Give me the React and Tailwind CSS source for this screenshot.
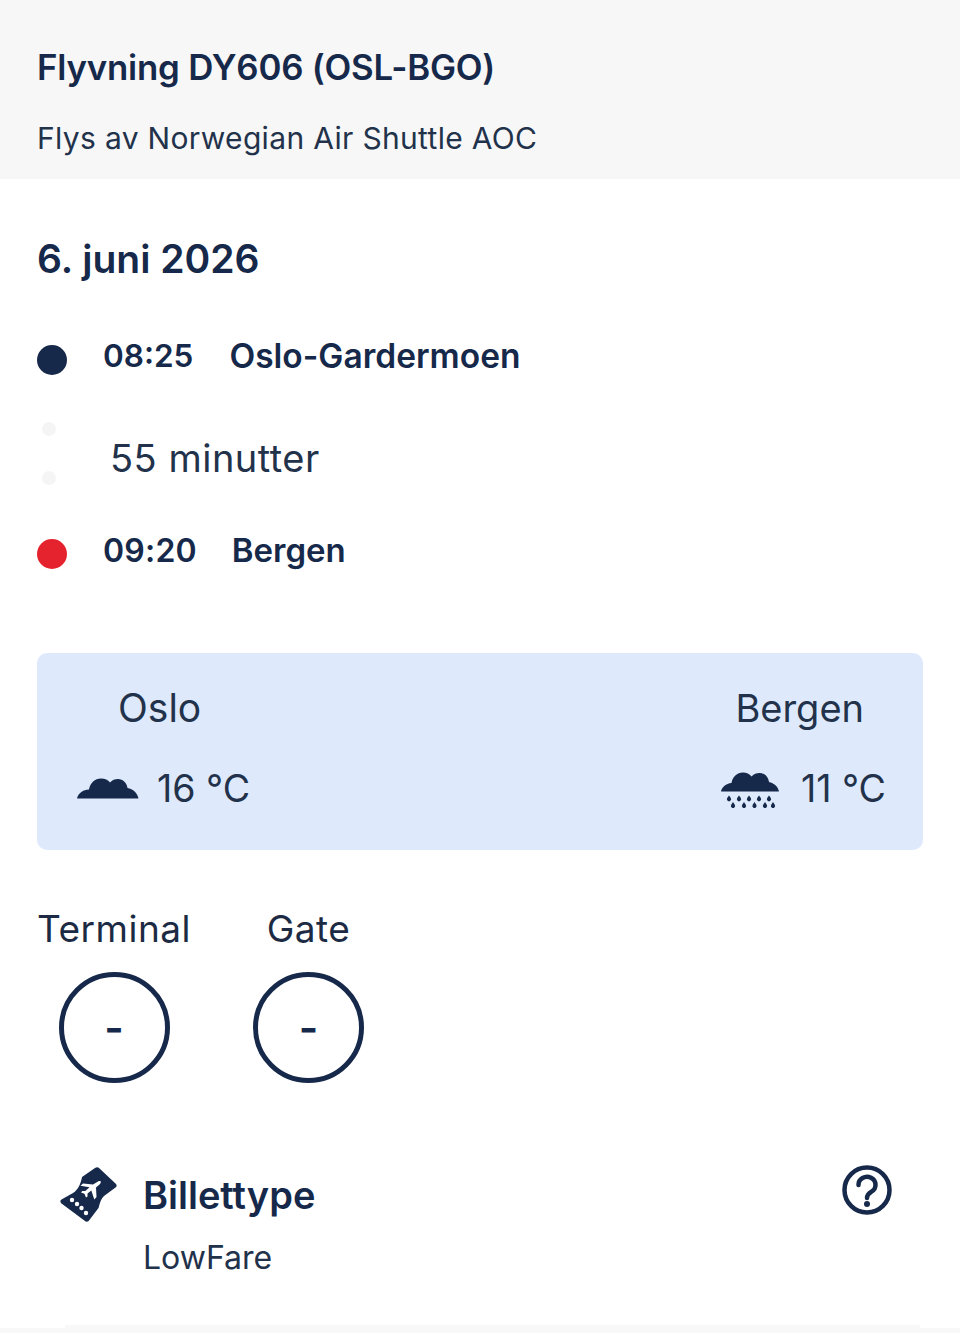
function CloudIcon({ className }) {
  return (
    <svg viewBox="0 0 62 22" className={className} fill="currentColor">
      <path d="M0 21.5 C1 16.5 6 12.5 12 12.5 C13 6 18 1.5 24 1.5 C28 1.5 31 3 33 5.5 C35 3 38 2 41 2 C46 2 50 6 50.5 11 C56 12 60.5 16 61.5 21.5 Z" />
    </svg>
  )
}

function RainIcon({ className }) {
  const top = [9, 19, 29, 39, 49]
  const bottom = [13, 24, 34.5, 45, 53]
  return (
    <svg viewBox="0 0 60 38" className={className} fill="currentColor">
      <path d="M1 20.5 C2 16 6 12.5 11.5 12 C12.5 6 17 1.5 23 1.5 C26.5 1.5 29.5 3 31.5 5.5 C33.5 3 36.5 2 39.5 2 C44.5 2 48.5 6 49 11 C54 12 58 15.5 59 20.5 Z" />
      {top.map((x) => (
        <path key={x} d={`M${x} 24.5 l1.8 2.6 a2.1 2.1 0 1 1 -3.6 0 Z`} />
      ))}
      {bottom.map((x) => (
        <path key={x} d={`M${x} 31 l1.8 2.8 a2.1 2.1 0 1 1 -3.6 0 Z`} />
      ))}
    </svg>
  )
}

function TicketIcon({ className }) {
  return (
    <svg viewBox="0 0 58 56" className={className}>
      <path
        fill="currentColor"
        d="M23 10 L36 1 C37.5 0 39 0 40 1 L56.5 16.5 C58 18 58 19.5 56.5 20.5 L45 29 C42 31.5 41 36 39.5 41 L30 53.5 C29 55 27 55 26 54 L2.5 36.5 C1 35 1 33.5 2.5 32.5 L14 26 C19 23 22 16 23 10 Z"
      />
      <g fill="#fff">
        <circle cx="13" cy="33" r="2.2" />
        <circle cx="18" cy="37" r="2.2" />
        <circle cx="22.5" cy="41" r="2.2" />
        <circle cx="27" cy="46" r="2.2" />
        <path d="M34 17.5 L39 14.5 C40.5 13.8 42 14 41.8 15.2 C41.6 16.5 40.5 17.5 39 18.8 L37 20.5 L37.5 30 L35.3 32.5 L32.3 23.5 L28.5 26.5 L28.5 29.5 L27 30.5 L25.5 26.8 L22 25.5 L23.3 24 L26.3 24 L30.5 20.3 L21.5 18.8 L24 16.5 Z" />
      </g>
    </svg>
  )
}

function HelpIcon({ className }) {
  return (
    <svg viewBox="0 0 50 50" className={className} fill="none" stroke="currentColor">
      <circle cx="25" cy="25" r="22.5" strokeWidth="4.5" />
      <path d="M16.5 20 a8.5 8 0 1 1 13 6.6 c-3 1.9 -4.5 3.4 -4.5 6.4" strokeWidth="4.5" strokeLinecap="round" />
      <circle cx="25" cy="39" r="3" fill="currentColor" stroke="none" />
    </svg>
  )
}

function GateCircle({ label }) {
  return (
    <div className="flex flex-col items-center">
      <span className="text-[37px] leading-[46px] text-[#1c2b43] tracking-[0.5px]">{label}</span>
      <div className="mt-[20px] w-[111px] h-[111px] rounded-full border-[5px] border-[#16294a] flex items-center justify-center text-[42px] font-semibold text-[#16294a]">
        -
      </div>
    </div>
  )
}

export default function App() {
  return (
    <div className="w-[960px] h-[1333px] overflow-hidden bg-white text-[#16294a] font-['Inter',sans-serif] flex flex-col">
      <header className="h-[179px] shrink-0 bg-[#f7f7f7] px-[37px] pt-[43px]">
        <h1 className="text-[34.8px] leading-[48px] font-semibold tracking-[-0.2px]">Flyvning DY606 (OSL-BGO)</h1>
        <p className="mt-[27px] text-[30px] leading-[40px] text-[#22324b] tracking-[0.33px]">Flys av Norwegian Air Shuttle AOC</p>
      </header>

      <main className="flex-1 flex flex-col">
        <h2 className="mx-[37px] mt-[55px] text-[39px] leading-[50px] font-semibold">6. juni 2026</h2>

        <div className="mx-[37px] mt-[50px] flex flex-col">
          <div className="h-[44px] flex items-center font-semibold text-[33px]">
            <span className="w-[30px] h-[30px] rounded-full bg-[#16294a] mt-[7px]" />
            <span className="ml-[36px] text-[31.5px]">08:25</span>
            <span className="ml-[36px] text-[33.5px]">Oslo-Gardermoen</span>
          </div>
          <div className="h-[151px] flex items-center">
            <div className="w-[24px] flex flex-col items-center gap-[35px]">
              <span className="w-[14px] h-[14px] rounded-full bg-[#f5f5f5]" />
              <span className="w-[14px] h-[14px] rounded-full bg-[#f5f5f5]" />
            </div>
            <span className="ml-[49px] mt-[8px] text-[38px] leading-[46px] text-[#22324b] tracking-[0.5px]">55 minutter</span>
          </div>
          <div className="h-[44px] flex items-center font-semibold text-[33px]">
            <span className="w-[30px] h-[30px] rounded-full bg-[#e5232e] mt-[6px]" />
            <span className="ml-[36px] text-[32px] tracking-[0.2px]">09:20</span>
            <span className="ml-[35px]">Bergen</span>
          </div>
        </div>

        <section className="mx-[37px] mt-[80px] h-[197px] rounded-[10px] bg-[#dee9fc] flex justify-between pl-[40px] pr-[37px] pt-[32px]">
          <div className="flex flex-col">
            <span className="ml-[41px] text-[39px] leading-[46px] text-[#22324b]">Oslo</span>
            <div className="mt-[35px] flex items-center">
              <CloudIcon className="w-[62px] h-[22px] mb-[2px]" />
              <span className="ml-[18px] text-[37.5px] leading-[46px] text-[#22324b]">16 °C</span>
            </div>
          </div>
          <div className="flex flex-col items-end">
            <span className="mr-[22px] text-[38px] leading-[46px] text-[#22324b]">Bergen</span>
            <div className="mt-[35px] flex items-center">
              <RainIcon className="w-[60px] h-[38px] mt-[2px]" />
              <span className="ml-[21px] text-[37.5px] leading-[46px] text-[#22324b]">11 °C</span>
            </div>
          </div>
        </section>

        <div className="ml-[37px] mt-[56px] flex gap-[62px]">
          <GateCircle label="Terminal" />
          <GateCircle label="Gate" />
        </div>

        <div className="mt-[82px] ml-[59px] mr-[68px] flex items-start">
          <TicketIcon className="w-[58px] h-[56px] mt-[2px] shrink-0" />
          <div className="ml-[26px] mt-[6px] flex-1">
            <h3 className="text-[38px] leading-[48px] font-semibold">Billettype</h3>
            <p className="mt-[19px] text-[32px] leading-[40px] text-[#22324b]">LowFare</p>
          </div>
          <HelpIcon className="w-[50px] h-[50px] shrink-0" />
        </div>

        <div className="mt-auto h-[8px] flex items-end">
          <div className="w-[65px] h-[5px] bg-[#f8f8f8]" />
          <div className="flex-1 h-[8px] bg-[#f8f8f8]" />
          <div className="w-[40px] h-[5px] bg-[#f8f8f8]" />
        </div>
      </main>
    </div>
  )
}
